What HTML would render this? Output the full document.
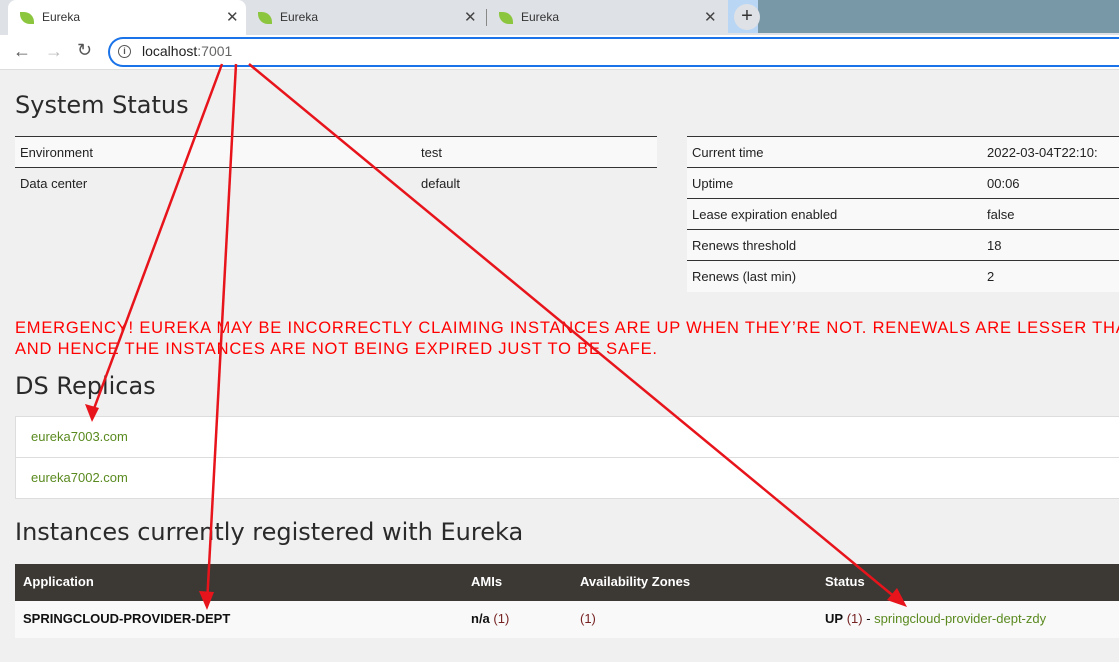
<!DOCTYPE html>
<html><head><meta charset="utf-8"><style>
*{margin:0;padding:0;box-sizing:border-box}
body{width:1119px;height:662px;overflow:hidden;background:#f0f0f0;font-family:"Liberation Sans",sans-serif;position:relative;color:#222}
#w{position:absolute;left:0;top:0;width:1119px;height:662px;overflow:hidden}
.abs{position:absolute}
.tabbar{left:0;top:0;width:1119px;height:35px;background:#dee1e6}
.tab{top:0;height:35px;font-size:12px;color:#333;line-height:35px}
.leaf{display:inline-block;width:14px;height:12px;background:#8cc63f;border-radius:0 10px 0 10px;vertical-align:middle;margin-right:8px}
.x{position:absolute;top:0;font-size:15px;color:#444}
h2{position:absolute;font-weight:normal;font-size:24px;color:#2a2a2a;left:15px;font-family:"DejaVu Sans",sans-serif}
table{border-collapse:collapse;font-size:13px;position:absolute}
td{height:31px;padding:0 5px;color:#222;white-space:nowrap}
.em{left:15px;color:#f00;font-size:16.5px;line-height:21px;white-space:nowrap;letter-spacing:0.8px;width:1104px;overflow:hidden}
</style></head><body><div id="w">
<div class="abs tabbar"></div>
<div class="abs" style="left:755px;top:0;width:364px;height:33px;background:#7898a8"></div>
<div class="abs" style="left:728px;top:0;width:30px;height:33px;background:#b9d6f4"></div>
<div class="abs tab" style="left:8px;width:238px;background:#fff;border-radius:8px 8px 0 0;padding-left:12px"><span class="leaf"></span>Eureka<span class="x" style="left:218px">✕</span></div>
<div class="abs tab" style="left:246px;width:240px;padding-left:12px"><span class="leaf"></span>Eureka<span class="x" style="left:218px">✕</span></div>
<div class="abs" style="left:486px;top:9px;width:1px;height:17px;background:#888"></div>
<div class="abs tab" style="left:487px;width:240px;padding-left:12px"><span class="leaf"></span>Eureka<span class="x" style="left:217px">✕</span></div>
<div class="abs" style="left:734px;top:4px;width:26px;height:26px;border-radius:13px;background:#dee1e6;text-align:center;line-height:25px;font-size:20px;color:#333">+</div>
<div class="abs" style="left:0;top:35px;width:1119px;height:35px;background:#fff;border-bottom:1px solid #ddd"></div>
<div class="abs" style="left:13px;top:41px;font-size:18px;color:#555">←</div>
<div class="abs" style="left:45px;top:41px;font-size:18px;color:#bbb">→</div>
<div class="abs" style="left:77px;top:40px;font-size:18px;color:#555">↻</div>
<div class="abs" style="left:108px;top:37px;width:1011px;height:30px;border:2px solid #1a73e8;border-right:none;border-radius:15px 0 0 15px"></div>
<div class="abs" style="left:118px;top:45px;width:13px;height:13px;border:1.5px solid #555;border-radius:50%;font-size:9px;text-align:center;line-height:10px;color:#555;font-weight:bold">i</div>
<div class="abs" style="left:142px;top:43px;font-size:14px;color:#222">localhost<span style="color:#666">:7001</span></div>

<h2 style="top:91px">System Status</h2>
<table style="left:15px;top:136px;width:642px;border-top:1px solid #333">
<tr style="background:#f9f9f9;border-bottom:1px solid #333"><td style="width:401px">Environment</td><td>test</td></tr>
<tr><td>Data center</td><td>default</td></tr></table>
<div class="abs" style="left:687px;top:136px;width:432px;height:156px;overflow:hidden">
<table style="left:0;top:0;width:440px;background:#f9f9f9;border-top:1px solid #333">
<tr style="border-bottom:1px solid #333"><td style="width:295px">Current time</td><td>2022-03-04T22:10:</td></tr>
<tr style="border-bottom:1px solid #333"><td>Uptime</td><td>00:06</td></tr>
<tr style="border-bottom:1px solid #333"><td>Lease expiration enabled</td><td>false</td></tr>
<tr style="border-bottom:1px solid #333"><td>Renews threshold</td><td>18</td></tr>
<tr><td>Renews (last min)</td><td>2</td></tr></table></div>

<div class="abs em" style="top:318px">EMERGENCY! EUREKA MAY BE INCORRECTLY CLAIMING INSTANCES ARE UP WHEN THEY’RE NOT. RENEWALS ARE LESSER THAN</div>
<div class="abs em" style="top:339px">AND HENCE THE INSTANCES ARE NOT BEING EXPIRED JUST TO BE SAFE.</div>

<h2 style="top:372px">DS Replicas</h2>
<div class="abs" style="left:15px;top:416px;width:1104px;height:83px;background:#fff;border:1px solid #ddd;border-right:none;font-size:13px;color:#5a8a1f">
<div style="height:41px;line-height:40px;padding-left:15px;border-bottom:1px solid #ddd">eureka7003.com</div>
<div style="height:40px;line-height:40px;padding-left:15px">eureka7002.com</div></div>

<h2 style="top:518px">Instances currently registered with Eureka</h2>
<div class="abs" style="left:15px;top:564px;width:1104px;height:37px;background:#3c3834;color:#fff;font-weight:bold;font-size:13px;line-height:35px">
<span class="abs" style="left:8px">Application</span><span class="abs" style="left:456px">AMIs</span><span class="abs" style="left:565px">Availability Zones</span><span class="abs" style="left:810px">Status</span></div>
<div class="abs" style="left:15px;top:601px;width:1104px;height:37px;background:#f9f9f9;font-size:13px;line-height:36px;color:#111">
<span class="abs" style="left:8px;font-weight:bold">SPRINGCLOUD-PROVIDER-DEPT</span><span class="abs" style="left:456px"><b>n/a</b> <span style="color:#722">(1)</span></span><span class="abs" style="left:565px;color:#722">(1)</span><span class="abs" style="left:810px"><b>UP</b> <span style="color:#722">(1)</span> - <span style="color:#5a8a1f">springcloud-provider-dept-zdy</span></span></div>

<svg class="abs" style="left:0;top:0" width="1119" height="662">
<g stroke="#e8141c" stroke-width="2.5" fill="none">
<line x1="222" y1="64" x2="92" y2="414"/>
<line x1="236" y1="64" x2="207" y2="604"/>
<line x1="249" y1="64" x2="902" y2="603"/>
</g>
<g fill="#e8141c">
<path d="M92,422 L85,404 L99,408z"/>
<path d="M207,610 L199,591 L214,592z"/>
<path d="M907,607 L887,600 L897,588z"/>
</g>
</svg>
</div></body></html>
